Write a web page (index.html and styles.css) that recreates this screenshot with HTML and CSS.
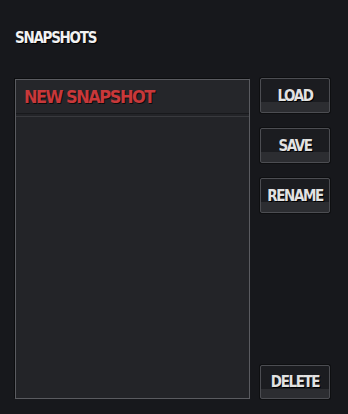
FILE: index.html
```html
<!DOCTYPE html>
<html>
<head>
<meta charset="utf-8">
<link rel="stylesheet" href="styles.css">
</head>
<body>
<div class="panel">
  <h1 class="title">SNAPSHOTS</h1>
  <div class="main">
    <div class="list">
      <div class="item selected">NEW SNAPSHOT</div>
      <div class="sep"></div>
    </div>
    <div class="buttons">
      <button class="btn">LOAD</button>
      <button class="btn">SAVE</button>
      <button class="btn">RENAME</button>
      <div class="spacer"></div>
      <button class="btn">DELETE</button>
    </div>
  </div>
</div>
</body>
</html>
```
FILE: styles.css
```css
html, body {
  margin: 0;
  padding: 0;
  background: #17181c;
  width: 348px;
  height: 414px;
  overflow: hidden;
}
.panel {
  padding: 0 0 0 15px;
  font-family: "DejaVu Sans Condensed", "DejaVu Sans", sans-serif;
  font-weight: bold;
}
.title {
  margin: 0;
  padding-top: 29px;
  height: 79px;
  box-sizing: border-box;
  font-size: 15px;
  line-height: 18px;
  color: #f2f2f2;
  text-shadow: 1px 1px 0 #000;
  letter-spacing: -1.3px;
}
.main {
  display: flex;
  gap: 10px;
  height: 320px;
}
.list {
  width: 235px;
  box-sizing: border-box;
  border: 1px solid #5a5b60;
  background: #232428;
  box-shadow: -1px -1px 0 #0c0d0f;
}
.item {
  height: 34px;
  box-sizing: border-box;
  padding: 6px 0 0 8px;
  font-size: 18px;
  line-height: 22px;
  letter-spacing: -1.5px;
  color: #c8383a;
  text-shadow: 1px 1px 0 #0c0c0c;
  background: #25262a;
  border-bottom: 1px solid #18191c;
}
.sep {
  margin-top: 2px;
  height: 1px;
  background: #38393d;
}
.buttons {
  width: 70px;
  display: flex;
  flex-direction: column;
  gap: 15px;
  margin-top: -1px;
}
.spacer {
  flex: 1;
}
.btn {
  height: 35px;
  width: 70px;
  box-sizing: border-box;
  border: 1px solid #4c4d52;
  border-radius: 2px;
  background: linear-gradient(to bottom, #1b1c20 0, #1b1c20 23px, #2c2d31 23px, #2c2d31 100%);
  box-shadow: 0 0 0 1px #0e0f11;
  color: #e2e2e2;
  font-family: inherit;
  font-weight: bold;
  font-size: 15px;
  line-height: 18px;
  letter-spacing: -1.4px;
  padding: 0;
  text-shadow: 1px 1px 0 #000;
}
.spacer + .btn {
  height: 34px;
}
```
